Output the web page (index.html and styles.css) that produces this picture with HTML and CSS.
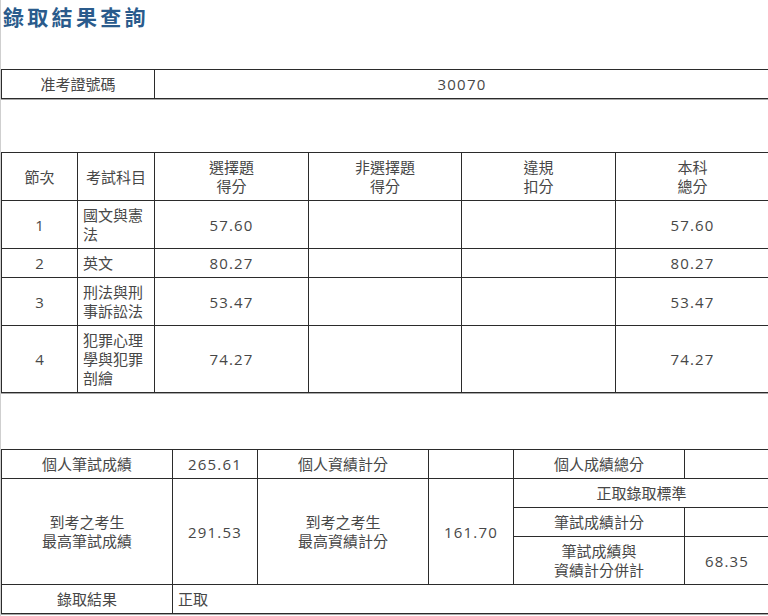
FILE: index.html
```html
<!DOCTYPE html>
<html lang="zh-Hant">
<head>
<meta charset="utf-8">
<title>錄取結果查詢</title>
<link rel="stylesheet" href="styles.css">
</head>
<body>
<div class="page">
  <h1 class="title">錄取結果查詢</h1>

  <table class="grid t-id">
    <colgroup><col class="w153"><col class="w615"></colgroup>
    <tr><td class="c">准考證號碼</td><td class="c num">30070</td></tr>
  </table>

  <table class="grid t-score">
    <colgroup>
      <col class="w76"><col class="w77"><col class="w154"><col class="w153"><col class="w154"><col class="w154">
    </colgroup>
    <tr>
      <td class="c">節次</td>
      <td class="c">考試科目</td>
      <td class="c">選擇題<br>得分</td>
      <td class="c">非選擇題<br>得分</td>
      <td class="c">違規<br>扣分</td>
      <td class="c">本科<br>總分</td>
    </tr>
    <tr>
      <td class="c">1</td><td>國文與憲法</td><td class="c num">57.60</td><td></td><td></td><td class="c num">57.60</td>
    </tr>
    <tr>
      <td class="c">2</td><td>英文</td><td class="c num">80.27</td><td></td><td></td><td class="c num">80.27</td>
    </tr>
    <tr>
      <td class="c">3</td><td>刑法與刑事訴訟法</td><td class="c num">53.47</td><td></td><td></td><td class="c num">53.47</td>
    </tr>
    <tr>
      <td class="c">4</td><td>犯罪心理學與犯罪剖繪</td><td class="c num">74.27</td><td></td><td></td><td class="c num">74.27</td>
    </tr>
  </table>

  <table class="grid t-result">
    <colgroup>
      <col class="w171"><col class="w85"><col class="w171"><col class="w85"><col class="w171"><col class="w85">
    </colgroup>
    <tr>
      <td class="c">個人筆試成績</td>
      <td class="c num">265.61</td>
      <td class="c">個人資績計分</td>
      <td></td>
      <td class="c">個人成績總分</td>
      <td></td>
    </tr>
    <tr>
      <td class="c" rowspan="3">到考之考生<br>最高筆試成績</td>
      <td class="c num" rowspan="3">291.53</td>
      <td class="c" rowspan="3">到考之考生<br>最高資績計分</td>
      <td class="c num" rowspan="3">161.70</td>
      <td class="c" colspan="2">正取錄取標準</td>
    </tr>
    <tr>
      <td class="c">筆試成績計分</td>
      <td></td>
    </tr>
    <tr>
      <td class="c">筆試成績與<br>資績計分併計</td>
      <td class="c num">68.35</td>
    </tr>
    <tr>
      <td class="c">錄取結果</td>
      <td colspan="5">正取</td>
    </tr>
  </table>
</div>
</body>
</html>
```

FILE: styles.css
```css
html, body {
  margin: 0;
  padding: 0;
  background: #ffffff;
  overflow: hidden;
}

body {
  font-family: "Open Sans", "Noto Sans CJK TC", sans-serif;
  font-size: 15px;
  color: #474747;
}

.page {
  width: 772px;
  min-height: 616px;
  border-left: 1px solid #cfcfcf;
}

.title {
  margin: 0;
  padding: 0 0 0 2px;
  height: 30px;
  line-height: 32px;
  font-family: "Noto Sans CJK TC", sans-serif;
  font-size: 21px;
  font-weight: 700;
  letter-spacing: 3.3px;
  color: #2a5b8c;
}

.grid {
  border-collapse: collapse;
  table-layout: fixed;
  width: 768px;
  box-shadow: 0 1px 0 #a8a8a8;
}

.grid td {
  border: 1px solid #2b2b2b;
  padding: 5px 5px 4px;
  line-height: 19px;
  vertical-align: middle;
  text-align: left;
  font-family: "Open Sans", "Noto Sans CJK TC", sans-serif;
}

.grid td.c {
  text-align: center;
}

.grid td.num {
  letter-spacing: 1.2px;
}

.t-id {
  margin-top: 39px;
}

.t-score {
  margin-top: 53px;
}

.t-result {
  margin-top: 56px;
}

.w76 { width: 76px; }
.w77 { width: 77px; }
.w85 { width: 85px; }
.w153 { width: 153px; }
.w154 { width: 154px; }
.w171 { width: 171px; }
.w615 { width: 615px; }
```
